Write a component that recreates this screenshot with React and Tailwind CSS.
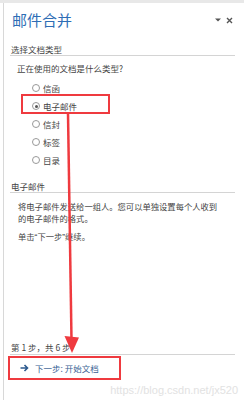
import React from "react";

const types = ["信函", "电子邮件", "信封", "标签", "目录"];

function Radio({ checked }) {
  return (
    <span className="flex items-center justify-center w-[8px] h-[8px] rounded-full border border-[#999] bg-white">
      {checked && <span className="w-[3px] h-[3px] rounded-full bg-[#555]" />}
    </span>
  );
}

function SectionTitle({ children, className = "" }) {
  return (
    <div className={`ml-[6px] mr-[9px] pl-[1px] border-b border-[#d4d4d4] text-[8.5px] leading-[12px] text-[#444] ${className}`}>
      {children}
    </div>
  );
}

export default function App() {
  return (
    <div className="relative w-[244px] h-[400px] bg-white overflow-hidden font-['Noto_Sans_CJK_SC',sans-serif]">
      <div className="h-[3px] bg-[#e8e8e8]" />
      <div className="ml-[3px] h-[397px] border-l border-[#d8d8d8] flex flex-col">
        {/* Header */}
        <div className="flex items-center pt-[8px] pl-[8px] pr-[11px]">
          <span className="text-[15px] leading-[18px] text-[#2e6db5]">邮件合并</span>
          <div className="ml-auto flex items-center gap-[5px] text-[#555]">
            <svg width="6" height="4" viewBox="0 0 6 4">
              <path d="M0 0.5h6L3 3.5z" fill="#555" />
            </svg>
            <svg width="7" height="7" viewBox="0 0 7 7">
              <path d="M1 1l5 5M6 1L1 6" stroke="#555" strokeWidth="1.4" />
            </svg>
          </div>
        </div>

        <SectionTitle className="mt-[14px]">选择文档类型</SectionTitle>
        <div className="ml-[13px] mt-[6px] text-[8.5px] leading-[12px] text-[#444]">
          正在使用的文档是什么类型?
        </div>
        <div className="mt-[5px] flex flex-col">
          {types.map((t, i) => (
            <div key={t} className="relative h-[18px] flex items-center gap-[3px] pl-[28px] text-[8.5px] text-[#444]">
              <Radio checked={i === 1} />
              <span className="leading-[12px]">{t}</span>
              {i === 1 && (
                <div className="absolute left-[17px] top-[-3px] w-[89px] h-[20px] border-2 border-[#ef3a3f]" />
              )}
            </div>
          ))}
        </div>

        <SectionTitle className="mt-[11px]">电子邮件</SectionTitle>
        <div className="ml-[14px] mt-[7px] text-[8.3px] leading-[12px] text-[#444] whitespace-nowrap">
          将电子邮件发送给一组人。您可以单独设置每个人收到
          <br />
          的电子邮件的格式。
        </div>
        <div className="ml-[14px] mt-[6px] text-[8.3px] leading-[12px] text-[#444]">
          单击<span className="font-['Liberation_Sans',sans-serif]">“</span>下一步<span className="font-['Liberation_Sans',sans-serif]">”</span>继续。
        </div>

        {/* Footer */}
        <div className="mt-auto">
          <SectionTitle className="pb-[1px]">第 1 步，共 6 步</SectionTitle>
          <div className="ml-[4px] mt-[1px] w-[113px] h-[24px] border-2 border-[#ef3a3f] flex items-center gap-[6px] pl-[10px]">
            <svg width="9" height="8" viewBox="0 0 9 8">
              <path d="M0.5 4h6.5M4.5 1l3 3-3 3" stroke="#2d5a8e" strokeWidth="1.6" fill="none" />
            </svg>
            <span className="text-[8.5px] leading-[12px] text-[#3a5f94]">下一步: 开始文档</span>
          </div>
          <div className="h-[20px] flex items-center justify-end pr-[6px] font-['Liberation_Sans',sans-serif] text-[11px] text-[#e2e2e2]">
            https://blog.csdn.net/jx520
          </div>
        </div>
      </div>

      {/* annotation arrow */}
      <svg className="absolute left-0 top-0 pointer-events-none" width="244" height="400" viewBox="0 0 244 400">
        <line x1="68" y1="113" x2="71.5" y2="340" stroke="#ef3a3f" strokeWidth="2.5" />
        <path d="M64.5 336L79 337.5L72 353Z" fill="#ef3a3f" />
      </svg>
    </div>
  );
}
